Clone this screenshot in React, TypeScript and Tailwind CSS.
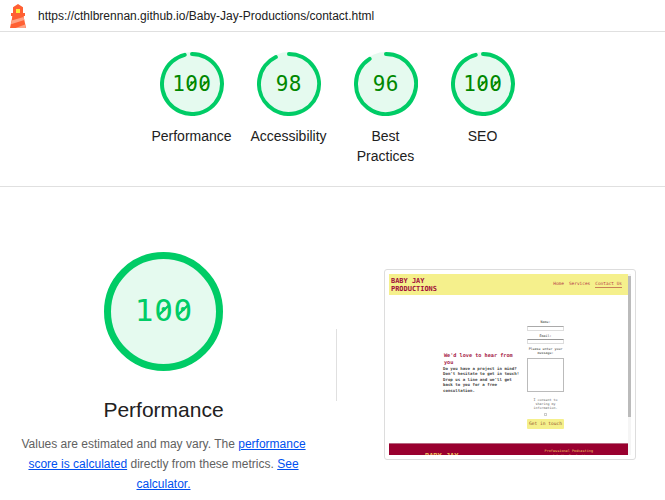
import React from "react";

type Gauge = { score: string; label: string; gap: number };

const gauges: Gauge[] = [
  { score: "100", label: "Performance", gap: 14 },
  { score: "98", label: "Accessibility", gap: 26 },
  { score: "96", label: "Best Practices", gap: 33 },
  { score: "100", label: "SEO", gap: 14 },
];

function Digits({ value, large = false }: { value: string; large?: boolean }) {
  return (
    <span className="flex">
      {value.split("").map((d, i) => (
        <span
          key={i}
          className={large ? "relative w-[19.4px] text-center" : "relative w-[13px] text-center"}
        >
          {d}
          {d === "0" && (
            <svg viewBox="0 0 13.2 24" className="absolute inset-0 h-full w-full">
              <path d="M2.8 15.8 10.4 8.6" stroke="currentColor" strokeWidth="1.6" />
            </svg>
          )}
        </span>
      ))}
    </span>
  );
}

function ScoreGauge({ score, label, gap }: Gauge) {
  const a = (gap * Math.PI) / 180;
  const x = 32 - 30 * Math.sin(a);
  const y = 32 - 30 * Math.cos(a);
  return (
    <div className="flex w-[97px] flex-col items-center">
      <div className="grid h-16 w-16 place-items-center">
        <svg viewBox="0 0 64 64" className="col-start-1 row-start-1 h-16 w-16">
          <circle cx="32" cy="32" r="32" fill="#e5faef" />
          <path
            d={`M32 2A30 30 0 1 1 ${x} ${y}`}
            fill="none"
            stroke="#00cc66"
            strokeWidth="4"
            strokeLinecap="round"
          />
        </svg>
        <div className="col-start-1 row-start-1 font-['DejaVu_Sans_Mono',monospace] text-[21px] leading-6 text-[#008800]">
          <Digits value={score} />
        </div>
      </div>
      <div className="mt-[10px] w-[84px] text-center text-[14px] leading-5 text-[#212121]">
        {label}
      </div>
    </div>
  );
}

function Lighthouse() {
  return (
    <svg viewBox="0 0 16 24" className="mt-px h-6 w-4">
      <path d="M8 0 13 3.2V9h2v3h-1.5v2h-11v-2H1V9h2V3.2z" fill="#ff6033" />
      <path d="M6 5h4v4H6z" fill="#ffeb3b" />
      <path d="M2.5 12h11L16 24H0z" fill="#ff6033" />
      <path d="M1.7 16.6 13.6 13l.7 3L1 20.2zM5.5 24l9.6-3.4.7 3.4z" fill="#ffa385" />
    </svg>
  );
}

function Screenshot() {
  return (
    <div className="mt-[82px] h-[191px] w-[252px] rounded-[3px] border border-[#dddddd] p-1 font-['DejaVu_Sans_Mono',monospace]">
      <div className="flex h-[181px] w-[242px] overflow-hidden">
        <div className="flex w-[239px] flex-col">
          <div className="flex h-[21px] shrink-0 justify-between bg-[#f5f08c] pl-[2px] pr-[6px] text-[#a00d3a]">
            <div className="pt-[2.5px] text-[6.95px] font-bold leading-[8px]">
              BABY JAY
              <br />
              PRODUCTIONS
            </div>
            <div className="flex gap-[5px] pt-[7px] text-[4.45px] leading-[6px] text-[#b8404a]">
              <span>Home</span>
              <span>Services</span>
              <span className="h-[6.5px] border-b border-[#c98058]">Contact Us</span>
            </div>
          </div>
          <div className="flex h-[148px] shrink-0 pl-[54px]">
            <div className="w-[84px] pt-[57px]">
              <div className="whitespace-nowrap pl-px text-[5.2px] font-bold leading-[7px] text-[#a52046]">
                We'd love to hear from
                <br />
                you
              </div>
              <div className="whitespace-nowrap text-[4.08px] font-bold leading-[5.4px] text-[#444444]">
                Do you have a project in mind?
                <br />
                Don't hesitate to get in touch!
                <br />
                Drop us a line and we'll get
                <br />
                back to you for a free
                <br />
                consultation.
              </div>
            </div>
            <div className="flex w-[37px] flex-col items-center pt-[24.5px] text-center text-[3.3px] leading-[4.2px] text-[#333333]">
              <span>Name:</span>
              <span className="mt-[2.3px] h-[5px] w-full border border-[#dddddd] border-t-[#aaaaaa]" />
              <span className="mt-[2.5px]">Email:</span>
              <span className="mt-[1.5px] h-[5px] w-full border border-[#dddddd] border-t-[#999999]" />
              <span className="mt-[3px] whitespace-nowrap">
                Please enter your
                <br />
                message:
              </span>
              <span className="mt-[2px] h-[34px] w-full shrink-0 border border-[#bbbbbb]" />
              <span className="mt-[6px] whitespace-nowrap text-[#666666]">
                I consent to
                <br />
                sharing my
                <br />
                information.
              </span>
              <span className="mt-[3px] h-[3px] w-[3px] shrink-0 border border-[#cccccc]" />
              <span className="mt-[3px] h-[10px] w-full shrink-0 whitespace-nowrap rounded-[1px] bg-[#f5f08c] text-[4.6px] leading-[10px] text-[#91502e]">
                Get in touch
              </span>
            </div>
          </div>
          <div className="flex h-3 shrink-0 justify-between overflow-hidden border-t border-[#b76780] bg-[#99002f] pl-[36px] pr-[35px] text-[#f0c05b]">
            <span className="pt-[8px] text-[6.95px] font-bold leading-[8px]">BABY JAY</span>
            <span className="pt-[5px] text-center text-[3.5px] leading-[5px]">
              Professional Podcasting
              <br />
              and Audio Production
            </span>
          </div>
        </div>
        <div className="h-full w-[3px] bg-[#f5f5f5]">
          <div className="mt-[2px] h-[141px] bg-[#bbbbbb]" />
        </div>
      </div>
    </div>
  );
}

export default function App() {
  const link = "text-[#0050f0] underline underline-offset-[1px]";
  return (
    <main className="h-[500px] w-[665px] overflow-hidden bg-white font-['Liberation_Sans',Arial,sans-serif] text-[#212121]">
      <header className="flex h-8 items-center gap-[12px] border-b border-[#e0e0e0] pl-[10px] text-[12px]">
        <Lighthouse />
        <span>https://cthlbrennan.github.io/Baby-Jay-Productions/contact.html</span>
      </header>
      <section className="flex h-[155px] border-b border-[#e0e0e0] pl-[143px] pt-[20px]">
        {gauges.map((g) => (
          <ScoreGauge key={g.label} {...g} />
        ))}
      </section>
      <section className="flex">
        <div className="flex w-[327px] flex-col items-center pt-[65px]">
          <div className="grid h-[119px] w-[119px] place-items-center rounded-full border-[7px] border-[#00cc66] bg-[#e5faef] pb-[3px]">
            <div className="font-['DejaVu_Sans_Mono',monospace] text-[31px] leading-9 text-[#00cc66]">
              <Digits value="100" large />
            </div>
          </div>
          <h1 className="mt-[23px] text-[21px] leading-8">Performance</h1>
          <p className="mt-[8px] whitespace-nowrap text-center text-[12px] leading-5 text-[#616161]">
            Values are estimated and may vary. The <a className={link}>performance</a>
            <br />
            <a className={link}>score is calculated</a> directly from these metrics. <a className={link}>See</a>
            <br />
            <a className={link}>calculator.</a>
          </p>
        </div>
        <div className="ml-[9px] mr-[47px] mt-[142px] h-[72px] w-px bg-[#e0e0e0]" />
        <Screenshot />
      </section>
    </main>
  );
}
